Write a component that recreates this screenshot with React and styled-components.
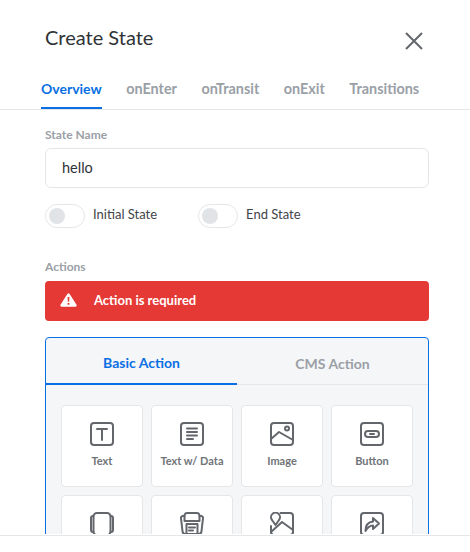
import React from 'react'
import styled, { createGlobalStyle } from 'styled-components'

const GlobalStyle = createGlobalStyle`
  html, body { margin: 0; padding: 0; background: #fff; }
  body { font-family: 'Lato', 'Noto Sans', sans-serif; }
`

const stroke = { fill: 'none', stroke: '#63676c', strokeWidth: 2, strokeLinecap: 'round', strokeLinejoin: 'round' }

const Frame = ({ children }) => (
  <svg width="24" height="24" viewBox="0 0 24 24" {...stroke}>
    <rect x="1" y="1" width="22" height="22" rx="3" />
    {children}
  </svg>
)

const TextIcon = () => (
  <Frame>
    <path d="M7 7h10M12 7v11" />
  </Frame>
)
const TextDataIcon = () => (
  <Frame>
    <path d="M7 6.500h10M7 10h10M7 13.500h10M7 17h6" />
  </Frame>
)
const ImageIcon = () => (
  <Frame>
    <circle cx="17" cy="6.500" r="2" />
    <path d="M1 17l8-7 14 8" />
  </Frame>
)
const ButtonIcon = () => (
  <Frame>
    <rect x="5" y="9" width="14" height="6" rx="3" />
    <path d="M10 12h4" />
  </Frame>
)
const SliderIcon = () => (
  <svg width="24" height="24" viewBox="0 0 24 24" {...stroke}>
    <rect x="3.500" y="1" width="17" height="22" rx="3.500" />
    <path d="M3.500 4H3a2 2 0 0 0-2 2v12a2 2 0 0 0 2 2h.5M20.500 4h.5a2 2 0 0 1 2 2v12a2 2 0 0 1-2 2h-.5" />
  </svg>
)
const FormIcon = () => (
  <svg width="24" height="24" viewBox="0 0 24 24" {...stroke}>
    <path d="M4.500 4H3a2 2 0 0 0-2 2.300L2.500 19a3 3 0 0 0 3 3h13a3 3 0 0 0 3-3L23 6.300A2 2 0 0 0 21 4h-1.500" />
    <path d="M4.500 9V3.500A2.500 2.500 0 0 1 7 1h10a2.500 2.500 0 0 1 2.500 2.500V9z" />
    <path d="M6.500 22V12h11v10M9 15.500h6M9 18.500h4" />
  </svg>
)
const PinImageIcon = () => (
  <svg width="24" height="24" viewBox="0 0 24 24" {...stroke}>
    <path d="M10.500 1H20a3 3 0 0 1 3 3v16a3 3 0 0 1-3 3H4a3 3 0 0 1-3-3v-6" />
    <path d="M5.500 13L2 8a4.500 4.500 0 1 1 7 0z" />
    <path d="M1 20l11-10 11 8" />
  </svg>
)
const ShareIcon = () => (
  <Frame>
    <path d="M5.500 19c0-5.500 3-9 7.500-9.500V6l6 5.500-6 5.500v-3.500c-3 0-5.500 2-7.500 5.500z" />
  </Frame>
)

const TABS = ['Overview', 'onEnter', 'onTransit', 'onExit', 'Transitions']
// second row is cut off by the footer before its labels
const ACTIONS = [
  { label: 'Text', Icon: TextIcon },
  { label: 'Text w/ Data', Icon: TextDataIcon },
  { label: 'Image', Icon: ImageIcon },
  { label: 'Button', Icon: ButtonIcon },
  { id: 'slider', Icon: SliderIcon },
  { id: 'form', Icon: FormIcon },
  { id: 'map', Icon: PinImageIcon },
  { id: 'share', Icon: ShareIcon },
]

function App() {
  return (
    <>
      <GlobalStyle />
      <Page>
        <Clip>
          <Header>
            <Title>Create State</Title>
            <Close aria-label="close">
              <svg width="18" height="18" viewBox="0 0 18 18" fill="none" stroke="#63676c" strokeWidth="2">
                <path d="M1 1l16 16M17 1L1 17" />
              </svg>
            </Close>
          </Header>
          <Tabs>
            {TABS.map((t, i) => (
              <Tab key={t} $active={i === 0}>{t}</Tab>
            ))}
          </Tabs>
          <Body>
            <Label>State Name</Label>
            <NameInput>hello</NameInput>
            <Toggles>
              <ToggleRow>
                <Toggle><Knob /></Toggle>
                <ToggleText>Initial State</ToggleText>
              </ToggleRow>
              <ToggleRow>
                <Toggle><Knob /></Toggle>
                <ToggleText>End State</ToggleText>
              </ToggleRow>
            </Toggles>
            <ActionsLabel>Actions</ActionsLabel>
            <Alert>
              <svg width="17" height="14" viewBox="0 0 18 15">
                <path d="M9 .3c.5 0 .9.3 1.200.7l7.400 11.600c.5.900-.1 2-1.200 2H1.600c-1.100 0-1.700-1.100-1.200-2L7.800 1C8.100.6 8.500.3 9 .3z" fill="#fff" />
                <path d="M8 4.300h2l-.3 5.200H8.300zM8 10.700h2v2H8z" fill="#e53935" />
              </svg>
              <span>Action is required</span>
            </Alert>
            <Panel>
              <PanelTabs>
                <PanelTab $active>Basic Action</PanelTab>
                <PanelTab>CMS Action</PanelTab>
              </PanelTabs>
              <Grid>
                {ACTIONS.map(({ label, id, Icon }) => (
                  <Card key={label || id}>
                    <Icon />
                    {label && <CardLabel>{label}</CardLabel>}
                  </Card>
                ))}
              </Grid>
            </Panel>
          </Body>
        </Clip>
        <Footer />
      </Page>
    </>
  )
}

export default App

const Page = styled.div`
  width: 470px;
  height: 552px;
  overflow: hidden;
  background: #fff;
`

const Clip = styled.div`
  height: 534px;
  overflow: hidden;
`

const Footer = styled.div`
  margin-top: 1px;
  border-top: 1px solid #e4e6e8;
`

const Header = styled.div`
  display: flex;
  justify-content: space-between;
  padding: 26px 47px 0 45px;
  height: 51px;
`

const Title = styled.h1`
  margin: 0;
  font-size: 20px;
  font-weight: 400;
  line-height: 23px;
  color: #2f3337;
`

const Close = styled.div`
  margin-top: 6px;
  line-height: 0;
`

const Tabs = styled.div`
  display: flex;
  gap: 24.5px;
  height: 32px;
  padding-left: 41px;
  border-bottom: 1px solid #e4e6e8;
`

const Tab = styled.div`
  height: 32px;
  box-sizing: border-box;
  padding-top: 3px;
  font-size: ${p => (p.$active ? '14px' : '14.4px')};
  line-height: 18px;
  font-weight: 700;
  color: ${p => (p.$active ? '#0a6fe3' : '#9aa0a6')};
  border-bottom: 2px solid ${p => (p.$active ? '#0a6fe3' : 'transparent')};
`

const Body = styled.div`
  padding: 17px 41px 0 45px;
`

const Label = styled.div`
  font-size: 12px;
  line-height: 16px;
  font-weight: 700;
  color: #9aa0a6;
`

const NameInput = styled.div`
  box-sizing: border-box;
  height: 40px;
  margin-top: 5px;
  padding: 0 0 2px 16px;
  display: flex;
  align-items: center;
  border: 1px solid #e4e6e8;
  border-radius: 6px;
  font-size: 14.5px;
  color: #2f3337;
`

const Toggles = styled.div`
  display: flex;
  gap: 41px;
  margin-top: 16px;
`

const ToggleRow = styled.div`
  display: flex;
  align-items: center;
  gap: 8px;
`

const Toggle = styled.div`
  box-sizing: border-box;
  width: 40px;
  height: 24px;
  padding: 3px;
  border: 1px solid #e4e6e8;
  border-radius: 12px;
`

const Knob = styled.div`
  width: 16px;
  height: 16px;
  border-radius: 50%;
  background: #e1e4e7;
`

const ToggleText = styled.span`
  padding-bottom: 5px;
  font-size: 13px;
  color: #3f4448;
`

const ActionsLabel = styled(Label)`
  margin-top: 31px;
`

const Alert = styled.div`
  box-sizing: border-box;
  height: 40px;
  margin-top: 6px;
  padding: 0 0 2px 15px;
  display: flex;
  align-items: center;
  gap: 17px;
  border-radius: 4px;
  background: #e53935;
  font-size: 13px;
  font-weight: 700;
  color: #fff;
`

const Panel = styled.div`
  margin-top: 16px;
  border: 1px solid #0a6fe3;
  border-radius: 4px;
  background: #f5f6f8;
`

const PanelTabs = styled.div`
  display: grid;
  grid-template-columns: 1fr 1fr;
  height: 46px;
  border-bottom: 1px solid #e4e6e8;
`

const PanelTab = styled.div`
  height: 47px;
  box-sizing: border-box;
  padding-top: 3px;
  display: flex;
  align-items: center;
  justify-content: center;
  font-size: 14px;
  font-weight: 700;
  color: ${p => (p.$active ? '#0a6fe3' : '#9aa0a6')};
  border-bottom: ${p => (p.$active ? '2px solid #0a6fe3' : 'none')};
`

const Grid = styled.div`
  display: grid;
  grid-template-columns: repeat(4, 82px);
  gap: 8px;
  padding: 20px 15px;
`

const Card = styled.div`
  box-sizing: border-box;
  height: 82px;
  padding-top: 16px;
  display: flex;
  flex-direction: column;
  align-items: center;
  background: #fff;
  border: 1px solid #e4e6e8;
  border-radius: 4px;
`

const CardLabel = styled.div`
  margin-top: 8px;
  font-size: 11px;
  line-height: 14px;
  font-weight: 700;
  color: #707478;
  white-space: nowrap;
`
